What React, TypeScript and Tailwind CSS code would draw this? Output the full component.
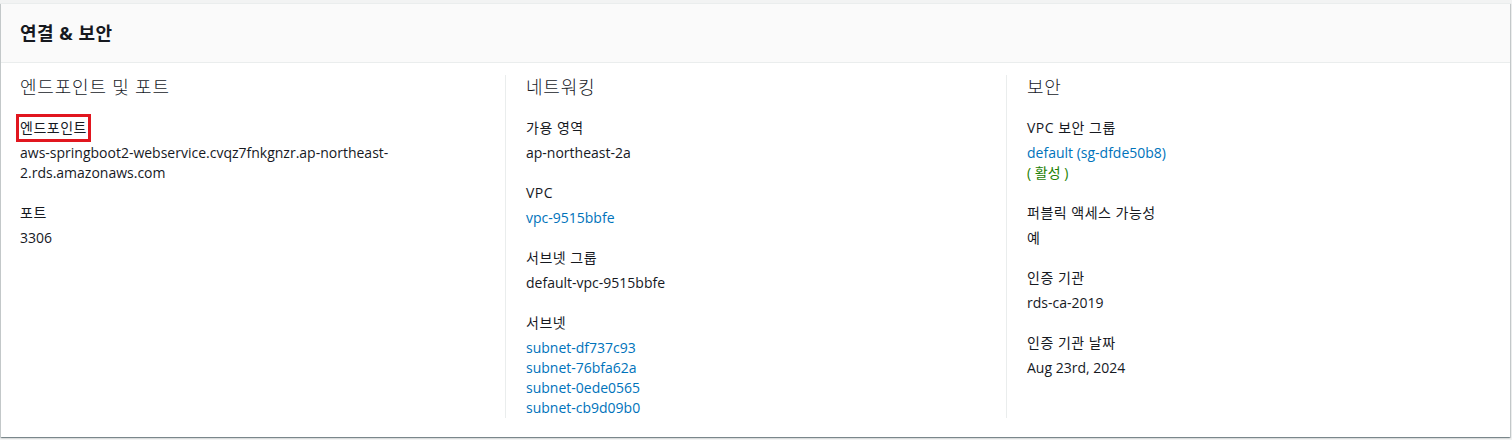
const font = '[font-family:"Open_Sans","Noto_Sans_CJK_KR",sans-serif]';

type Item = {
  label: string;
  values: { text: string; tone?: 'link' | 'ok' }[];
  marked?: boolean;
};

type Column = {
  title: string;
  items: Item[];
};

const columns: Column[] = [
  {
    title: '엔드포인트 및 포트',
    items: [
      {
        label: '엔드포인트',
        marked: true,
        values: [{ text: 'aws-springboot2-webservice.cvqz7fnkgnzr.ap-northeast-2.rds.amazonaws.com' }],
      },
      { label: '포트', values: [{ text: '3306' }] },
    ],
  },
  {
    title: '네트워킹',
    items: [
      { label: '가용 영역', values: [{ text: 'ap-northeast-2a' }] },
      { label: 'VPC', values: [{ text: 'vpc-9515bbfe', tone: 'link' }] },
      { label: '서브넷 그룹', values: [{ text: 'default-vpc-9515bbfe' }] },
      {
        label: '서브넷',
        values: [
          { text: 'subnet-df737c93', tone: 'link' },
          { text: 'subnet-76bfa62a', tone: 'link' },
          { text: 'subnet-0ede0565', tone: 'link' },
          { text: 'subnet-cb9d09b0', tone: 'link' },
        ],
      },
    ],
  },
  {
    title: '보안',
    items: [
      {
        label: 'VPC 보안 그룹',
        values: [
          { text: 'default (sg-dfde50b8)', tone: 'link' },
          { text: '( 활성 )', tone: 'ok' },
        ],
      },
      { label: '퍼블릭 액세스 가능성', values: [{ text: '예' }] },
      { label: '인증 기관', values: [{ text: 'rds-ca-2019' }] },
      { label: '인증 기관 날짜', values: [{ text: 'Aug 23rd, 2024' }] },
    ],
  },
];

function ValueLine({ text, tone }: { text: string; tone?: 'link' | 'ok' }) {
  if (tone === 'link') return <div className="text-[#0073bb]">{text}</div>;
  if (tone === 'ok') return <div className="text-[#1d8102]">{text}</div>;
  return <div className="text-[#16191f]">{text}</div>;
}

function KeyValue({ item }: { item: Item }) {
  return (
    <div>
      <div className="tracking-[0.5px] text-[#16191f]">
        {item.marked ? (
          <span className="inline-block outline-[3px] outline-solid outline-[#e1161f] outline-offset-[1px]">{item.label}</span>
        ) : (
          item.label
        )}
      </div>
      <div className="mt-[5px]">
        {item.values.map((v) => (
          <ValueLine key={v.text} text={v.text} tone={v.tone} />
        ))}
      </div>
    </div>
  );
}

export default function App() {
  return (
    <div className={`${font} min-h-[440px] bg-[#f2f3f3] pl-px pr-[2px] pt-[3px] text-sm leading-5 antialiased`}>
      <section className="border-t border-[#eaeded] bg-white shadow-[0_1px_1px_0_rgba(0,28,36,0.3),1px_1px_1px_0_rgba(0,28,36,0.15),-1px_1px_1px_0_rgba(0,28,36,0.15)]">
        <header className="border-b border-[#eaeded] bg-[#fafafa] px-[19px] py-[18px]">
          <h1 className="text-lg font-bold leading-[22px] tracking-[0.5px] text-[#16191f]">연결 &amp; 보안</h1>
        </header>
        <div className="grid grid-cols-[485px_501px_1fr] pb-[19px] pl-[19px] pr-5 pt-3">
          {columns.map((col, i) => (
            <div key={col.title} className={i === 0 ? 'pr-5' : 'border-l border-[#eaeded] pl-5 pr-5'}>
              <h2 className="text-lg font-light leading-6 tracking-[0.8px] text-[#16191f]">{col.title}</h2>
              <div className="mt-[19px] flex flex-col gap-5">
                {col.items.map((item) => (
                  <KeyValue key={item.label} item={item} />
                ))}
              </div>
            </div>
          ))}
        </div>
      </section>
    </div>
  );
}
